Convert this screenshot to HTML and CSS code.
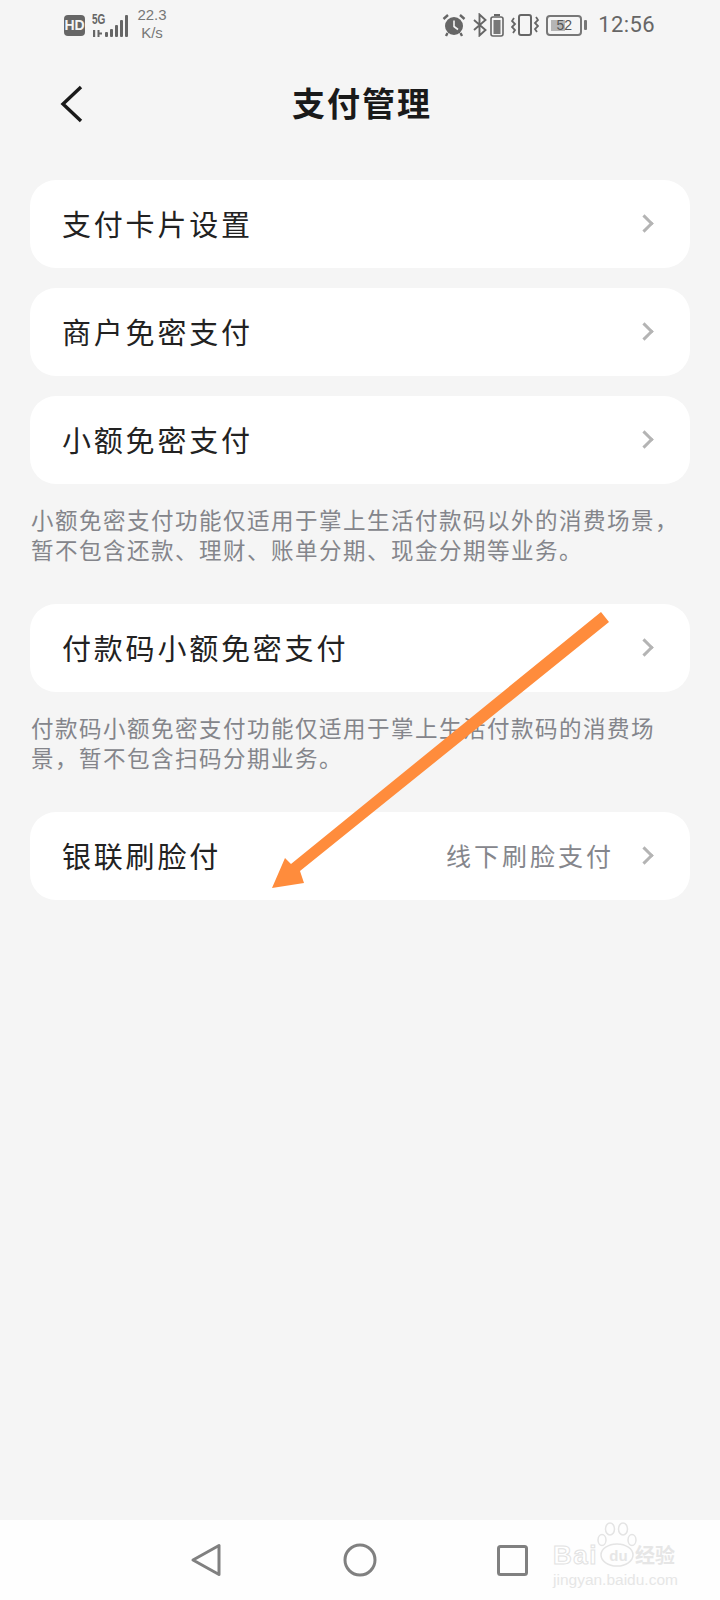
FILE: index.html
```html
<!DOCTYPE html>
<html lang="zh-CN">
<head>
  <meta charset="UTF-8">
  <title>支付管理</title>
  <link rel="stylesheet" href="styles.css">
</head>
<body>
  <div class="phone">
    <!-- Status bar -->
    <div class="status-bar">
      <div class="status-left">
        <span class="hd-badge">HD</span>
        <svg class="signal" width="37" height="24" viewBox="0 0 37 24">
          <rect x="2" y="16" width="2.2" height="7" fill="#666"/>
          <path d="M6.5 16H8.5V18.5H11V20.5H8.5V23H6.5Z" fill="#666"/>
          <rect x="14" y="18" width="3" height="5" rx="1" fill="#666"/>
          <rect x="19" y="15" width="3" height="8" rx="1" fill="#666"/>
          <rect x="24" y="11" width="3" height="12" rx="1" fill="#666"/>
          <rect x="29" y="6" width="3" height="17" rx="1" fill="#666"/>
          <rect x="34" y="1" width="3" height="22" rx="1" fill="#666"/>
        </svg>
        <span class="five-g">5G</span>
        <span class="net-speed">22.3<br>K/s</span>
      </div>
      <div class="status-right">
        <svg class="ic ic-alarm" width="24" height="24" viewBox="0 0 24 24">
          <circle cx="12" cy="13" r="9" fill="#666"/>
          <path d="M12 7.5V13.5L16 16.5" fill="none" stroke="#f5f5f5" stroke-width="1.6"/>
          <path d="M1.5 6L6 2M22.5 6L18 2M5.5 20L4 23M18.5 20L20 23" stroke="#666" stroke-width="2.4" fill="none"/>
        </svg>
        <svg class="ic ic-bt" width="14" height="24" viewBox="0 0 14 24">
          <path d="M1 7L12.5 17L6.5 22.5V1.5L12.5 7L1 17" fill="none" stroke="#666" stroke-width="1.9"/>
        </svg>
        <svg class="ic ic-batt" width="14" height="24" viewBox="0 0 14 24">
          <rect x="1" y="4" width="12" height="19" rx="2" fill="none" stroke="#666" stroke-width="1.6"/>
          <rect x="4" y="1" width="6" height="2" fill="#666"/>
          <rect x="3.5" y="7" width="7" height="14" fill="#777"/>
        </svg>
        <svg class="ic ic-vib" width="28" height="24" viewBox="0 0 28 24">
          <rect x="8" y="2" width="12" height="20" rx="2" fill="none" stroke="#666" stroke-width="2"/>
          <path d="M3 5L1 8L4 11L1 14L4 17L2 20M25 4L27 7L24 10L27 13L24 16L26 19" fill="none" stroke="#666" stroke-width="1.8"/>
        </svg>
        <div class="battery">
          <div class="battery-body">
            <span class="battery-fill"></span>
            <span class="battery-num">52</span>
          </div>
          <span class="battery-tip"></span>
        </div>
        <span class="clock">12:56</span>
      </div>
    </div>

    <!-- Header -->
    <div class="header">
      <svg class="back" width="24" height="38" viewBox="0 0 24 38">
        <path d="M21 2L3 19L21 36" fill="none" stroke="#1a1a1a" stroke-width="3.4"/>
      </svg>
      <h1>支付管理</h1>
    </div>

    <!-- Rows -->
    <div class="content">
      <div class="row"><span class="row-name">支付卡片设置</span><span class="chev"></span></div>
      <div class="row"><span class="row-name">商户免密支付</span><span class="chev"></span></div>
      <div class="row"><span class="row-name">小额免密支付</span><span class="chev"></span></div>
      <p class="note">小额免密支付功能仅适用于掌上生活付款码以外的消费场景，暂不包含还款、理财、账单分期、现金分期等业务。</p>
      <div class="row"><span class="row-name">付款码小额免密支付</span><span class="chev"></span></div>
      <p class="note">付款码小额免密支付功能仅适用于掌上生活付款码的消费场景，暂不包含扫码分期业务。</p>
      <div class="row"><span class="row-name">银联刷脸付</span><span class="row-value">线下刷脸支付</span><span class="chev"></span></div>
    </div>

    <!-- Nav bar -->
    <div class="nav-bar">
      <svg class="nav-ic" width="32" height="34" viewBox="0 0 32 34">
        <path d="M29 2.5V31.5L3 17Z" fill="none" stroke="#808080" stroke-width="3" stroke-linejoin="round"/>
      </svg>
      <svg class="nav-ic" width="34" height="34" viewBox="0 0 34 34">
        <circle cx="17" cy="17" r="15" fill="none" stroke="#808080" stroke-width="3"/>
      </svg>
      <svg class="nav-ic" width="31" height="31" viewBox="0 0 31 31">
        <rect x="1.5" y="1.5" width="28" height="28" rx="2" fill="none" stroke="#808080" stroke-width="3"/>
      </svg>
      <div class="watermark">
        <svg class="paw" width="42" height="46" viewBox="0 0 42 46">
          <g fill="none" stroke="#e4e4e4" stroke-width="1.5">
            <ellipse cx="6" cy="18" rx="4" ry="5.5"/>
            <ellipse cx="14" cy="7" rx="4.5" ry="6"/>
            <ellipse cx="27" cy="7" rx="4.5" ry="6"/>
            <ellipse cx="36" cy="18" rx="4" ry="5.5"/>
            <ellipse cx="21" cy="33" rx="16" ry="11"/>
          </g>
        </svg>
        <div class="wm-top"><span class="wm-bai">Bai</span><span class="wm-du">du</span><span class="wm-cn">经验</span></div>
        <div class="wm-url">jingyan.baidu.com</div>
      </div>
    </div>

    <!-- Hand-drawn arrow over the screenshot -->
    <svg class="arrow" width="720" height="1600" viewBox="0 0 720 1600">
      <path d="M601 612L609 622L300 871L304 883L272 888L285 858L291 864Z" fill="#ff8c3c"/>
    </svg>
  </div>
</body>
</html>
```

FILE: styles.css
```css
* {
  box-sizing: border-box;
}
html, body {
  margin: 0;
  padding: 0;
}
body {
  font-family: "Noto Sans CJK SC", "Noto Sans", sans-serif;
  background: #f5f5f5;
}
.phone {
  position: relative;
  width: 720px;
  height: 1600px;
  display: flex;
  flex-direction: column;
  background: #f5f5f5;
  overflow: hidden;
}
.status-bar {
  height: 50px;
  padding: 0 65px 0 64px;
  display: flex;
  justify-content: space-between;
  align-items: center;
  color: #666;
}
.status-left, .status-right {
  display: flex;
  align-items: center;
}
.status-left {
  position: relative;
}
.hd-badge {
  width: 21px;
  height: 21px;
  margin-right: 6px;
  border-radius: 4px;
  background: #666;
  color: #f5f5f5;
  font: bold 14px/21px "Liberation Sans", sans-serif;
  text-align: center;
}
.five-g {
  position: absolute;
  left: 28px;
  top: 4px;
  font: bold 14px/14px "Liberation Sans", sans-serif;
  transform: scaleX(0.72);
  transform-origin: left top;
}
.signal {
  margin-top: 1px;
}
.net-speed {
  margin-left: 9px;
  margin-top: -2px;
  width: 30px;
  font: 15px/18px "Liberation Sans", sans-serif;
  text-align: center;
  color: #777;
}
.ic-alarm {
  margin-right: 7px;
}
.ic-bt {
  margin-right: 3px;
}
.ic-batt {
  margin-right: 7px;
}
.ic-vib {
  margin-right: 7px;
}
.battery {
  display: flex;
  align-items: center;
  margin-right: 11px;
}
.battery-body {
  position: relative;
  width: 36px;
  height: 21px;
  padding: 3px;
  border: 2px solid #777;
  border-radius: 4px;
}
.battery-fill {
  display: block;
  width: 52%;
  height: 100%;
  background: #b5b5b5;
}
.battery-num {
  position: absolute;
  left: 0;
  right: 0;
  top: 0;
  font: 14px/17px "Liberation Sans", sans-serif;
  text-align: center;
  color: #555;
}
.battery-tip {
  width: 3px;
  height: 10px;
  margin-left: 2px;
  border-radius: 1px;
  background: #777;
}
.clock {
  font: 22px/24px Roboto, sans-serif;
  letter-spacing: 0.4px;
  color: #666;
}
.header {
  height: 108px;
  padding-left: 60px;
  display: flex;
  align-items: center;
  position: relative;
}
.header h1 {
  position: absolute;
  left: 4px;
  right: 0;
  margin: -4px 0 0;
  text-align: center;
  font-size: 33px;
  font-weight: 700;
  letter-spacing: 2px;
  color: #1a1a1a;
}
.content {
  flex: 1;
  padding: 22px 30px 0;
}
.row {
  height: 88px;
  margin-bottom: 20px;
  padding: 0 36px 3px 32px;
  display: flex;
  align-items: center;
  background: #fff;
  border-radius: 26px;
}
.row-name {
  flex: 1;
  font-size: 29px;
  letter-spacing: 2.8px;
  color: #222;
}
.row-value {
  margin-right: 24px;
  font-size: 25px;
  letter-spacing: 3px;
  color: #85868c;
}
.chev {
  width: 13px;
  height: 13px;
  margin: 2px 3px 0 0;
  border-top: 3px solid #b4b4b4;
  border-right: 3px solid #b4b4b4;
  transform: rotate(45deg);
}
.note {
  margin: 0 0 40px;
  padding-left: 1px;
  font-size: 22.5px;
  line-height: 30px;
  letter-spacing: 1.5px;
  color: #84858b;
}
.nav-bar {
  position: relative;
  height: 80px;
  background: #fefefe;
  padding-left: 190px;
  display: flex;
  align-items: center;
}
.nav-ic:nth-child(2) {
  margin-left: 121px;
}
.nav-ic:nth-child(3) {
  margin-left: 120px;
}
.watermark {
  position: absolute;
  left: 553px;
  top: 12px;
  width: 130px;
  color: #e6e6e6;
}
.paw {
  position: absolute;
  left: 43px;
  top: -10px;
}
.wm-top {
  position: relative;
  margin-top: 10px;
  display: flex;
  align-items: center;
  height: 26px;
}
.wm-bai {
  width: 49px;
  font: bold 26px/26px "Liberation Sans", sans-serif;
  letter-spacing: 1.5px;
  color: #fff;
  -webkit-text-stroke: 1px #e2e2e2;
}
.wm-du {
  width: 33px;
  margin-top: 2px;
  font: bold 15px/18px "Liberation Sans", sans-serif;
  text-align: center;
}
.wm-cn {
  font: bold 20px/26px "Noto Sans CJK SC", sans-serif;
}
.wm-url {
  font: 15.5px/18px "Liberation Sans", sans-serif;
  margin-top: 3px;
}
.arrow {
  position: absolute;
  left: 0;
  top: 0;
  pointer-events: none;
}
```
